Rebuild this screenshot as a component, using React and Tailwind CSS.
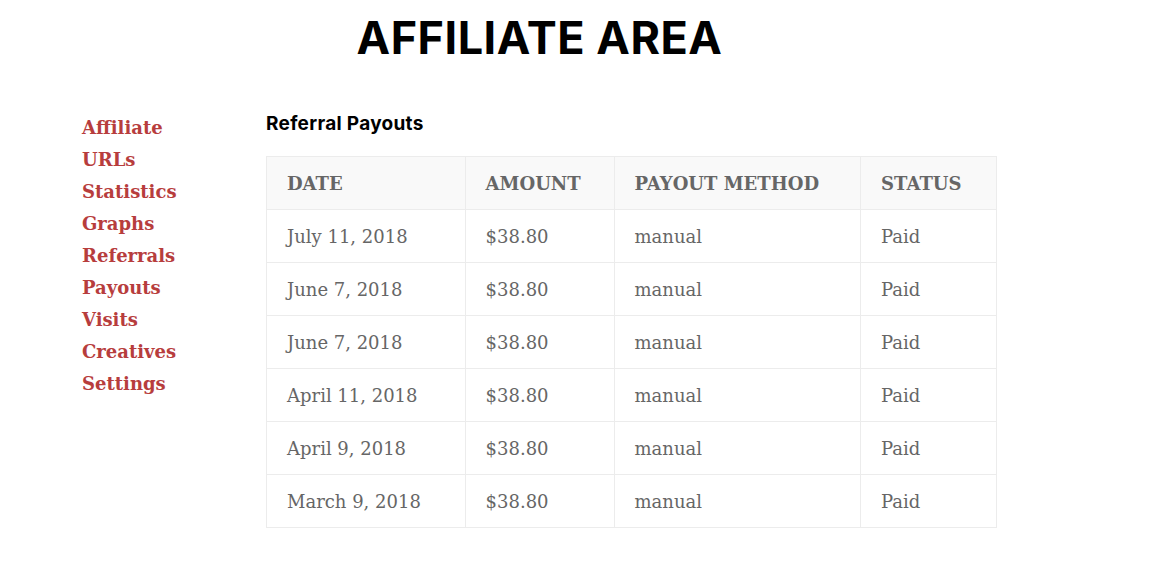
const links = ["Affiliate", "URLs", "Statistics", "Graphs", "Referrals", "Payouts", "Visits", "Creatives", "Settings"];

const payouts = [
  { date: "July 11, 2018", amount: "$38.80", method: "manual", status: "Paid" },
  { date: "June 7, 2018", amount: "$38.80", method: "manual", status: "Paid" },
  { date: "June 7, 2018", amount: "$38.80", method: "manual", status: "Paid" },
  { date: "April 11, 2018", amount: "$38.80", method: "manual", status: "Paid" },
  { date: "April 9, 2018", amount: "$38.80", method: "manual", status: "Paid" },
  { date: "March 9, 2018", amount: "$38.80", method: "manual", status: "Paid" },
];

const serif = "font-['DejaVu_Serif',serif]";

export default function App() {
  return (
    <div className="min-h-screen w-full bg-white">
      <div className="ml-[82px] w-[915px] pt-[10px]">
        <h1 className="text-center font-['Inter',sans-serif] text-[45px] font-bold leading-[56px] tracking-[0.5px] text-black">
          AFFILIATE AREA
        </h1>

        <div className="mt-[46px] flex">
          <nav className={`w-[184px] pt-[-1px] ${serif}`}>
            <ul className="flex flex-col">
              {links.map((l) => (
                <li key={l} className="text-[18px] font-bold leading-[32px] text-[#b73d3d]">
                  <a href="#">{l}</a>
                </li>
              ))}
            </ul>
          </nav>

          <main className="flex-1">
            <h4 className="font-['Inter',sans-serif] text-[19px] font-bold leading-[24px] tracking-[0.3px] text-black">
              Referral Payouts
            </h4>
            <table className={`mt-[20px] w-[731px] border-collapse border border-[#ececec] ${serif}`}>
              <colgroup>
                <col className="w-[199px]" />
                <col className="w-[149px]" />
                <col className="w-[247px]" />
                <col className="w-[136px]" />
              </colgroup>
              <thead>
                <tr className="bg-[#f9f9f9]">
                  {["DATE", "AMOUNT", "PAYOUT METHOD", "STATUS"].map((h) => (
                    <th
                      key={h}
                      className="h-[53px] border border-[#ececec] px-[20px] text-left text-[18px] font-bold text-[#666]"
                    >
                      {h}
                    </th>
                  ))}
                </tr>
              </thead>
              <tbody>
                {payouts.map((p, i) => (
                  <tr key={i}>
                    {[p.date, p.amount, p.method, p.status].map((v, j) => (
                      <td
                        key={j}
                        className="h-[53px] border border-[#ececec] px-[20px] text-[18px] text-[#666]"
                      >
                        {v}
                      </td>
                    ))}
                  </tr>
                ))}
              </tbody>
            </table>
          </main>
        </div>
      </div>
    </div>
  );
}
